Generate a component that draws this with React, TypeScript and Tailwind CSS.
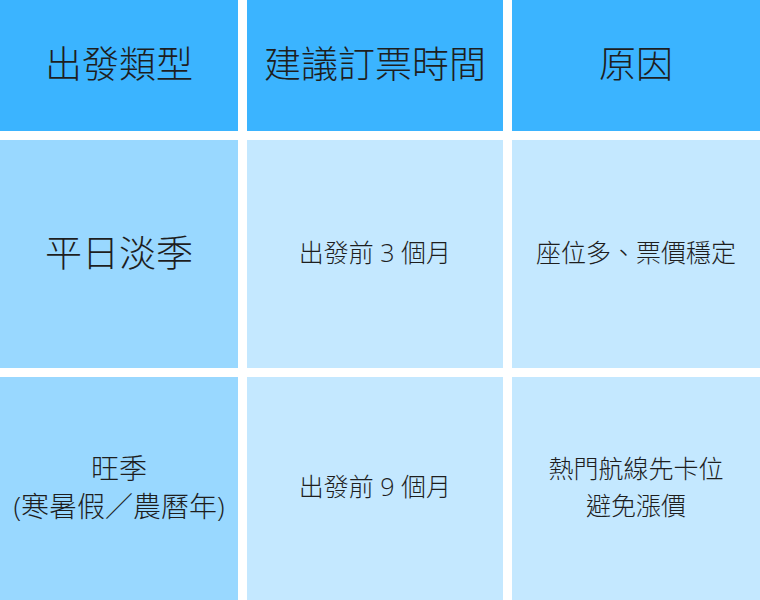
import React from "react";

const font = { fontFamily: '"Open Sans", "Noto Sans CJK TC", sans-serif' };

const rows = [
  {
    type: <span className="text-[37px]">平日淡季</span>,
    when: "出發前 3 個月",
    why: <>座位多、票價穩定</>,
  },
  {
    type: (
      <span className="text-[28px] leading-[38px]">
        旺季
        <br />
        (寒暑假／農曆年)
      </span>
    ),
    when: "出發前 9 個月",
    why: (
      <>
        熱門航線先卡位
        <br />
        避免漲價
      </>
    ),
  },
];

export default function App() {
  return (
    <div
      className="w-[760px] h-[600px] bg-white grid grid-cols-[238px_256px_248px] grid-rows-[131px_228px_223px] gap-[9px] text-[#1e1e1e] text-center font-light"
      style={font}
    >
      <div className="bg-[#3bb4ff] flex items-center justify-center text-[37px] pb-[3px]">出發類型</div>
      <div className="bg-[#3bb4ff] flex items-center justify-center text-[37px] pb-[3px]">建議訂票時間</div>
      <div className="bg-[#3bb4ff] flex items-center justify-center text-[37px] pb-[3px]">原因</div>
      {rows.map((r, i) => (
        <React.Fragment key={i}>
          <div className="bg-[#99d8ff] flex items-center justify-center pb-[3px]">{r.type}</div>
          <div className="bg-[#c4e8ff] flex items-center justify-center text-[25px] pb-[3px]">{r.when}</div>
          <div className="bg-[#c4e8ff] flex items-center justify-center text-[25px] leading-[37px] pb-[3px]">
            <span>{r.why}</span>
          </div>
        </React.Fragment>
      ))}
    </div>
  );
}
